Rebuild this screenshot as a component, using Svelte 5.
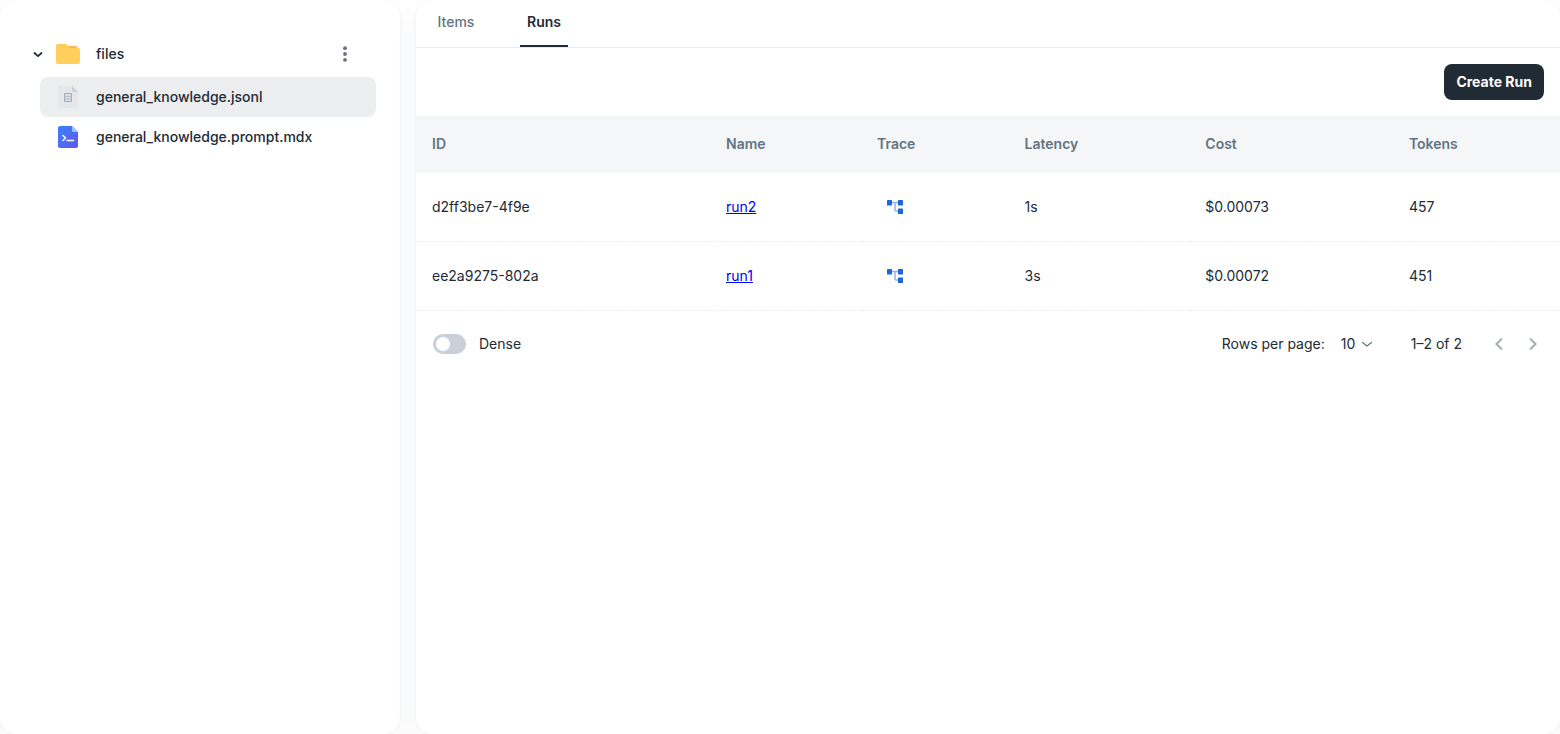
<script lang="ts">
	type Run = {
		id: string;
		name: string;
		latency: string;
		cost: string;
		tokens: number;
	};

	const tabs = ['Items', 'Runs'];

	const files = [
		{ name: 'general_knowledge.jsonl', kind: 'data' },
		{ name: 'general_knowledge.prompt.mdx', kind: 'prompt' }
	];

	const runs: Run[] = [
		{ id: 'd2ff3be7-4f9e', name: 'run2', latency: '1s', cost: '$0.00073', tokens: 457 },
		{ id: 'ee2a9275-802a', name: 'run1', latency: '3s', cost: '$0.00072', tokens: 451 }
	];

	let activeTab = $state('Runs');
	let selectedFile = $state('general_knowledge.jsonl');
	let open = $state(true);
	let dense = $state(false);
	let rowsPerPage = $state(10);
</script>

<svelte:head>
	<title>Runs</title>
</svelte:head>

<div class="layout">
	<aside class="panel sidebar">
		<div class="folder-row">
			<button class="folder" aria-expanded={open} onclick={() => (open = !open)}>
				<svg class="chevron" class:closed={!open} width="12" height="12" viewBox="0 0 12 12" aria-hidden="true">
					<path d="M2.5 5 6 8.2 9.5 5" fill="none" stroke="#212b36" stroke-width="1.8" stroke-linecap="round" stroke-linejoin="round" />
				</svg>
				<svg width="24" height="24" viewBox="0 0 24 24" aria-hidden="true">
					<path d="M11 4h8.5a2 2 0 0 1 2 2v4H11z" fill="#ffb55d" />
					<path d="M2 2h7.8c.8 0 1.4.3 1.7 1l1 2c.3.6.8 1 1.5 1h8a2 2 0 0 1 2 2v12a2 2 0 0 1-2 2H2a2 2 0 0 1-2-2V4a2 2 0 0 1 2-2z" fill="#ffce5b" />
				</svg>
				<span>files</span>
			</button>
			<button class="icon-button" aria-label="More actions">
				<svg width="20" height="20" viewBox="0 0 20 20" fill="#637381" aria-hidden="true">
					<circle cx="10" cy="4.2" r="1.9" />
					<circle cx="10" cy="10" r="1.9" />
					<circle cx="10" cy="15.8" r="1.9" />
				</svg>
			</button>
		</div>
		{#if open}
			<ul>
				{#each files as file}
					<li>
						<button class="file" class:selected={selectedFile === file.name} onclick={() => (selectedFile = file.name)}>
							<svg width="24" height="24" viewBox="0 0 24 24" aria-hidden="true">
								{#if file.kind === 'data'}
									<path d="M4 1h12l6 6v14a2 2 0 0 1-2 2H4a2 2 0 0 1-2-2V3a2 2 0 0 1 2-2z" fill="#e4e6ea" />
									<path d="M16 1l6 6h-4.5A1.5 1.5 0 0 1 16 5.5z" fill="#cbd0d6" />
									<path d="M8.5 8.5h7v8h-7z" fill="#dadde2" stroke="#a5adb8" />
									<path d="M8.5 11.5h7M8.5 14h7" fill="none" stroke="#b3bac3" stroke-width=".8" />
								{:else}
									<defs>
										<linearGradient id="prompt" x1="0" y1="0" x2="1" y2="1">
											<stop offset="0" stop-color="#3b82f6" />
											<stop offset="1" stop-color="#6257f2" />
										</linearGradient>
									</defs>
									<path d="M4 1h12l6 6v14a2 2 0 0 1-2 2H4a2 2 0 0 1-2-2V3a2 2 0 0 1 2-2z" fill="url(#prompt)" />
									<path d="M16 1l6 6h-4.5A1.5 1.5 0 0 1 16 5.5z" fill="#8ecbfa" />
									<path d="M7 10.5l2.5 2.5L7 15.5M11 15.500h6.500" fill="none" stroke="#fff" stroke-width="1.5" stroke-linecap="round" stroke-linejoin="round" />
								{/if}
							</svg>
							<span>{file.name}</span>
						</button>
					</li>
				{/each}
			</ul>
		{/if}
	</aside>

	<main class="panel">
		<div class="tabs" role="tablist">
			{#each tabs as tab}
				<button role="tab" aria-selected={activeTab === tab} class:active={activeTab === tab} onclick={() => (activeTab = tab)}>
					{tab}
				</button>
			{/each}
		</div>

		<div class="toolbar">
			<button class="create">Create Run</button>
		</div>

		<table class:dense>
			<thead>
				<tr>
					<th class="id">ID</th>
					<th class="name">Name</th>
					<th class="trace">Trace</th>
					<th class="latency">Latency</th>
					<th class="cost">Cost</th>
					<th>Tokens</th>
				</tr>
			</thead>
			<tbody>
				{#each runs as run}
					<tr>
						<td>{run.id}</td>
						<td><a href="#{run.name}">{run.name}</a></td>
						<td>
							<button class="icon-button" aria-label="Open trace of {run.name}">
								<svg width="20" height="20" viewBox="0 0 20 20" aria-hidden="true">
									<path d="M6 5.5h8M10 5.5V13a1 1 0 0 0 1 1h3" fill="none" stroke="#92b3e9" stroke-width="1.5" />
									<rect x="2" y="3" width="5" height="5.5" rx=".5" fill="#1f66d6" />
									<rect x="13" y="3" width="5" height="5.5" rx=".5" fill="#1f66d6" />
									<rect x="13" y="11.5" width="5" height="5.5" rx=".5" fill="#1f66d6" />
								</svg>
							</button>
						</td>
						<td>{run.latency}</td>
						<td>{run.cost}</td>
						<td>{run.tokens}</td>
					</tr>
				{/each}
			</tbody>
		</table>

		<div class="footer">
			<label class="switch">
				<input type="checkbox" role="switch" bind:checked={dense} />
				<span>Dense</span>
			</label>
			<div class="pagination">
				<label for="rows">Rows per page:</label>
				<div class="select">
					<select id="rows" bind:value={rowsPerPage}>
						<option value={5}>5</option>
						<option value={10}>10</option>
						<option value={25}>25</option>
					</select>
					<svg width="12" height="12" viewBox="0 0 12 12" aria-hidden="true">
						<path d="M1.5 4.5 6 8l4.500-3.500" fill="none" stroke="#637381" stroke-width="1.2" stroke-linecap="round" stroke-linejoin="round" />
					</svg>
				</div>
				<span class="range">1–{runs.length} of {runs.length}</span>
				<button class="page" aria-label="Previous page" disabled>
					<svg width="18" height="18" viewBox="0 0 18 18" aria-hidden="true">
						<path d="M12 3.5 6.5 9l5.5 5.5" fill="none" stroke="#a4adb7" stroke-width="2" />
					</svg>
				</button>
				<button class="page" aria-label="Next page" disabled>
					<svg width="18" height="18" viewBox="0 0 18 18" aria-hidden="true">
						<path d="M6 3.5 11.5 9 6 14.5" fill="none" stroke="#a4adb7" stroke-width="2" />
					</svg>
				</button>
			</div>
		</div>
	</main>
</div>

<style>
	:global(body) {
		margin: 0;
		background: #fff;
		color: #212b36;
		font-family: Inter, 'Open Sans', sans-serif;
		font-size: 14px;
		line-height: 22px;
	}

	button {
		border: 0;
		padding: 0;
		background: none;
		color: inherit;
		font: inherit;
		cursor: pointer;
	}

	svg {
		display: block;
		flex: none;
	}

	.layout {
		display: grid;
		grid-template-columns: 400px minmax(0, 1fr);
		gap: 16px;
		min-height: 100vh;
	}

	.panel {
		border-radius: 16px;
		background: #fff;
		box-shadow:
			0 0 2px rgba(145, 158, 171, 0.2),
			0 12px 24px -4px rgba(145, 158, 171, 0.12);
		overflow: hidden;
	}

	.sidebar {
		box-sizing: border-box;
		padding: 32px 24px;
	}

	.folder-row {
		display: flex;
		align-items: center;
		justify-content: space-between;
		height: 44px;
		padding: 0 16px 1px 8px;
	}

	.folder {
		display: flex;
		align-items: center;
		font-weight: 500;
	}

	.chevron {
		margin-right: 12px;
	}

	.chevron.closed {
		transform: rotate(-90deg);
	}

	.folder span,
	.file span {
		margin-left: 16px;
	}

	.icon-button {
		display: grid;
		place-items: center;
		width: 30px;
		height: 36px;
	}

	ul {
		margin: 0;
		padding: 0 0 0 16px;
		list-style: none;
	}

	.file {
		display: flex;
		align-items: center;
		width: 100%;
		height: 40px;
		padding: 0 16px;
		border-radius: 8px;
		font-weight: 500;
	}

	.file.selected {
		background: #edeef0;
	}

	.tabs {
		display: flex;
		gap: 40px;
		padding: 0 16px;
		border-bottom: 1px solid #e8eaec;
	}

	.tabs button {
		min-width: 48px;
		height: 47px;
		padding-bottom: 2px;
		border-bottom: 2px solid transparent;
		color: #637381;
		font-weight: 500;
	}

	.tabs button.active {
		border-color: #212b36;
		color: #212b36;
		font-weight: 600;
	}

	.toolbar {
		display: flex;
		justify-content: flex-end;
		padding: 16px;
	}

	.create {
		height: 36px;
		padding: 0 12px;
		border-radius: 8px;
		background: #212b36;
		color: #fff;
		font-weight: 700;
	}

	table {
		width: 100%;
		table-layout: fixed;
		border-collapse: separate;
		border-spacing: 0;
	}

	th,
	td {
		box-sizing: border-box;
		padding: 0 16px;
		text-align: left;
	}

	th {
		height: 57px;
		padding-bottom: 1px;
		background: #f4f6f8;
		color: #637381;
		font-weight: 600;
	}

	td {
		height: 69px;
		border-bottom: 1px dashed #edeff2;
	}

	.dense td {
		height: 49px;
	}

	.id {
		width: 25.7%;
	}

	.name {
		width: 13.2%;
	}

	.trace {
		width: 12.9%;
	}

	.latency {
		width: 15.8%;
	}

	.cost {
		width: 17.8%;
	}

	td a {
		color: #0000ee;
	}

	td .icon-button {
		width: 36px;
	}

	.footer {
		display: flex;
		align-items: center;
		justify-content: space-between;
		height: 65px;
		padding: 0 10px 0 17px;
	}

	.switch {
		display: flex;
		align-items: center;
		gap: 13px;
		cursor: pointer;
	}

	.switch input {
		appearance: none;
		display: flex;
		align-items: center;
		width: 33px;
		height: 20px;
		margin: 0;
		padding: 0 3px;
		border-radius: 10px;
		background: #c9d0d7;
	}

	.switch input::before {
		content: '';
		width: 14px;
		height: 14px;
		border-radius: 50%;
		background: #fff;
	}

	.switch input:checked {
		justify-content: flex-end;
		background: #212b36;
	}

	.pagination {
		display: flex;
		align-items: center;
	}

	.select {
		display: flex;
		align-items: center;
		margin: 0 38px 0 16px;
	}

	select {
		appearance: none;
		width: 32px;
		margin-right: -12px;
		padding: 0;
		border: 0;
		background: none;
		color: inherit;
		font: inherit;
	}

	.select svg {
		pointer-events: none;
	}

	.range {
		margin-right: 20px;
	}

	.page {
		display: grid;
		place-items: center;
		width: 34px;
		height: 34px;
	}
</style>
